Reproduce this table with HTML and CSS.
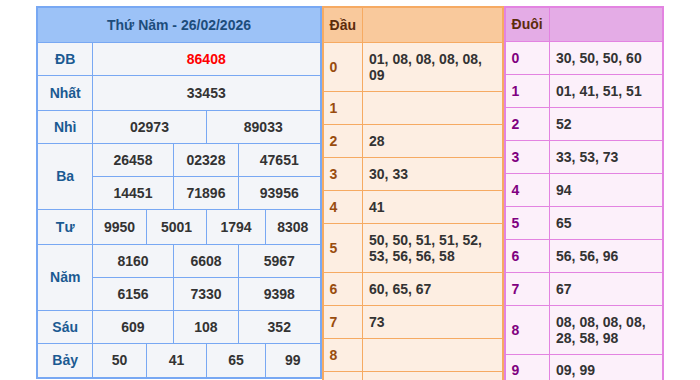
FILE: index.html
```html
<!DOCTYPE html>
<html lang="vi">
<head>
  <meta charset="UTF-8" />
  <meta name="viewport" content="width=device-width, initial-scale=1.0"/>
  <title>KQXS Thứ Năm 26/02/2026</title>
  <link rel="stylesheet" href="styles.css">
</head>
<body>

  <div class="wrap">

    <table class="kq">
      <colgroup>
        <col class="c-label">
        <col class="c1"><col class="c2"><col class="c3"><col class="c4"><col class="c5"><col class="c6">
      </colgroup>
      <tr class="h-head">
        <th colspan="7">Thứ Năm - 26/02/2026</th>
      </tr>
      <tr>
        <td class="label">ĐB</td>
        <td colspan="6" class="db">86408</td>
      </tr>
      <tr class="tall">
        <td class="label">Nhất</td>
        <td colspan="6">33453</td>
      </tr>
      <tr>
        <td class="label">Nhì</td>
        <td colspan="3">02973</td>
        <td colspan="3">89033</td>
      </tr>
      <tr>
        <td class="label" rowspan="2">Ba</td>
        <td colspan="2">26458</td>
        <td colspan="2">02328</td>
        <td colspan="2">47651</td>
      </tr>
      <tr>
        <td colspan="2">14451</td>
        <td colspan="2">71896</td>
        <td colspan="2">93956</td>
      </tr>
      <tr class="tall">
        <td class="label">Tư</td>
        <td>9950</td>
        <td colspan="2">5001</td>
        <td colspan="2">1794</td>
        <td>8308</td>
      </tr>
      <tr>
        <td class="label" rowspan="2">Năm</td>
        <td colspan="2">8160</td>
        <td colspan="2">6608</td>
        <td colspan="2">5967</td>
      </tr>
      <tr>
        <td colspan="2">6156</td>
        <td colspan="2">7330</td>
        <td colspan="2">9398</td>
      </tr>
      <tr>
        <td class="label">Sáu</td>
        <td colspan="2">609</td>
        <td colspan="2">108</td>
        <td colspan="2">352</td>
      </tr>
      <tr class="tall">
        <td class="label">Bảy</td>
        <td>50</td>
        <td colspan="2">41</td>
        <td colspan="2">65</td>
        <td>99</td>
      </tr>
    </table>

    <table class="lt dau">
      <colgroup><col class="d-num"><col></colgroup>
      <tr class="h-dau"><th>Đầu</th><th></th></tr>
      <tr class="two"><td class="num">0</td><td>01, 08, 08, 08, 08, 09</td></tr>
      <tr><td class="num">1</td><td></td></tr>
      <tr><td class="num">2</td><td>28</td></tr>
      <tr><td class="num">3</td><td>30, 33</td></tr>
      <tr><td class="num">4</td><td>41</td></tr>
      <tr class="two"><td class="num">5</td><td>50, 50, 51, 51, 52, 53, 56, 56, 58</td></tr>
      <tr><td class="num">6</td><td>60, 65, 67</td></tr>
      <tr><td class="num">7</td><td>73</td></tr>
      <tr><td class="num">8</td><td></td></tr>
      <tr><td class="num">9</td><td>94, 96, 98, 99</td></tr>
    </table>

    <table class="lt duoi">
      <colgroup><col class="u-num"><col></colgroup>
      <tr class="h-duoi"><th>Đuôi</th><th></th></tr>
      <tr><td class="num">0</td><td>30, 50, 50, 60</td></tr>
      <tr><td class="num">1</td><td>01, 41, 51, 51</td></tr>
      <tr><td class="num">2</td><td>52</td></tr>
      <tr><td class="num">3</td><td>33, 53, 73</td></tr>
      <tr><td class="num">4</td><td>94</td></tr>
      <tr><td class="num">5</td><td>65</td></tr>
      <tr><td class="num">6</td><td>56, 56, 96</td></tr>
      <tr><td class="num">7</td><td>67</td></tr>
      <tr class="two"><td class="num">8</td><td>08, 08, 08, 08, 28, 58, 98</td></tr>
      <tr><td class="num">9</td><td>09, 99</td></tr>
    </table>

  </div>

</body>
</html>
```

FILE: styles.css
```css
body {
  margin: 0;
  background: #fff;
  font-family: "Liberation Sans", Arial, sans-serif;
  font-size: 14px;
  font-weight: bold;
  color: #333;
  height: 380px;
  overflow: hidden;
}
.wrap {
  display: flex;
  justify-content: center;
  align-items: flex-start;
  padding-top: 6px;
}
table {
  border-collapse: collapse;
  table-layout: fixed;
  line-height: 16px;
}
th, td {
  padding: 0 6px;
}

/* bảng kết quả */
.kq {
  width: 285px;
  border: 2px solid #78a8f3;
  background: #f3f5f9;
}
.kq td, .kq th {
  border: 1px solid #78a8f3;
  text-align: center;
  padding: 0;
}
.kq col.c-label { width: 55px; }
.kq col.c1 { width: 54px; }
.kq col.c2 { width: 27px; }
.kq col.c3 { width: 33px; }
.kq col.c4 { width: 32px; }
.kq col.c5 { width: 27px; }
.kq col.c6 { width: 55px; }
.kq tr { height: 33px; }
.kq tr.tall { height: 35px; }
.kq tr.h-head { height: 35px; }
.kq th {
  background: #9cc2f7;
  color: #1d4d7c;
}
.kq .label { color: #1b5a92; }
.kq .db { color: #f00; }

/* bảng đầu / đuôi */
.lt {
  border: 2px solid;
}
.lt td, .lt th {
  border: 1px solid;
  text-align: left;
}
.lt tr { height: 33px; }
.lt tr.two { height: 49px; }
.lt th { color: #5c2b0c; }

.dau {
  width: 182px;
  border-color: #f6aa62;
  background: #fdeee2;
}
.dau td, .dau th { border-color: #f6aa62; }
.dau th { background: #f9c99c; }
.dau col.d-num { width: 40px; }
.dau .h-dau { height: 35px; }
.dau .num { color: #994c0e; }

.duoi {
  width: 160px;
  border-color: #e383e1;
  background: #fcf0fa;
}
.duoi td, .duoi th { border-color: #e383e1; }
.duoi th { background: #e4ace6; }
.duoi col.u-num { width: 45px; }
.duoi .h-duoi { height: 34px; }
.duoi .num { color: #800080; }
```
